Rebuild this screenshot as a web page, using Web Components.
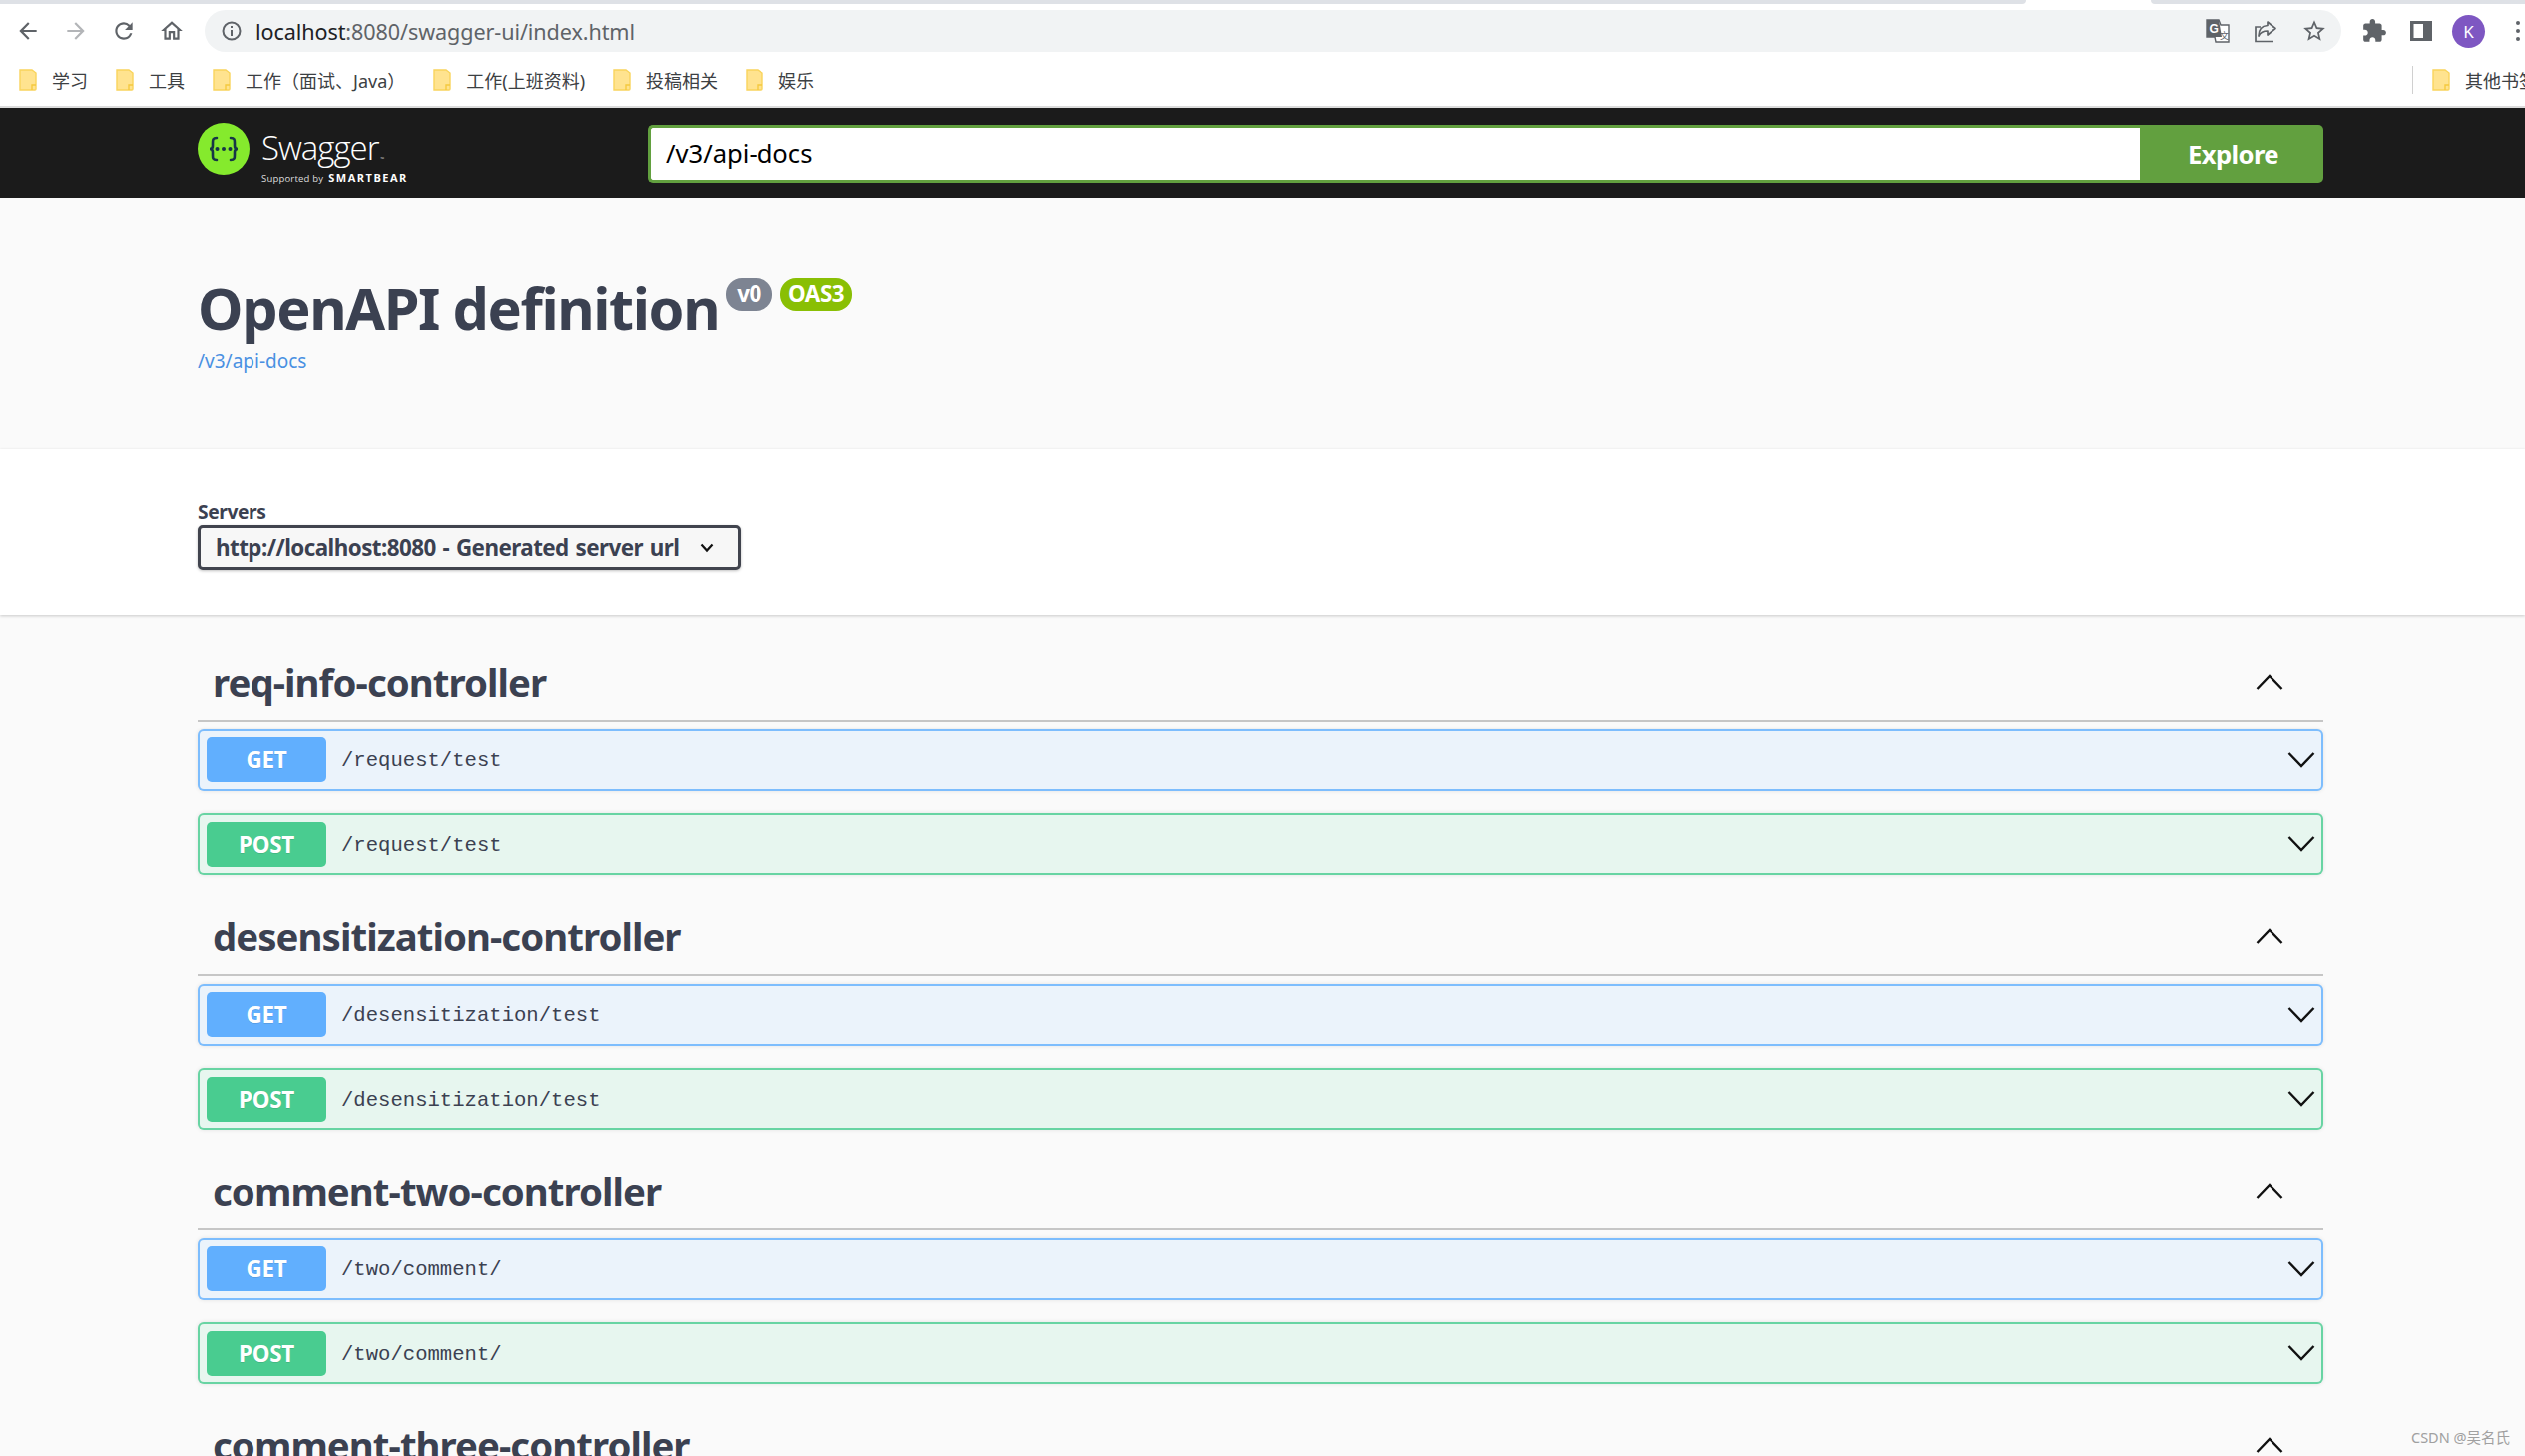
<!DOCTYPE html>
<html lang="en">
<head>
<meta charset="utf-8">
<title>Swagger UI</title>
<style>
    html, body { margin: 0; height: 1459px; overflow: hidden; background: #fafafa; }
    body { font-family: "Noto Sans", "Noto Sans CJK SC", sans-serif; }
    .sections { display: block; padding-top: 6px; }
</style>
</head>
<body>
<browser-bar></browser-bar>
<swagger-nav></swagger-nav>
<api-info></api-info>
<server-picker></server-picker>
<div class="sections">
    <api-tag name="req-info-controller">
        <op-row method="GET" path="/request/test"></op-row>
        <op-row method="POST" path="/request/test"></op-row>
    </api-tag>
    <api-tag name="desensitization-controller">
        <op-row method="GET" path="/desensitization/test"></op-row>
        <op-row method="POST" path="/desensitization/test"></op-row>
    </api-tag>
    <api-tag name="comment-two-controller">
        <op-row method="GET" path="/two/comment/"></op-row>
        <op-row method="POST" path="/two/comment/"></op-row>
    </api-tag>
    <api-tag name="comment-three-controller"></api-tag>
</div>
<water-mark>CSDN @吴名氏</water-mark>

<script>
const ICONS = {
    back: 'M20 11H7.83l5.59-5.59L12 4l-8 8 8 8 1.41-1.41L7.83 13H20v-2z',
    forward: 'M4 11h12.17l-5.59-5.59L12 4l8 8-8 8-1.41-1.41L16.17 13H4v-2z',
    reload: 'M17.65 6.35A7.96 7.96 0 0 0 12 4c-4.42 0-7.99 3.58-7.99 8s3.57 8 7.99 8c3.73 0 6.84-2.55 7.73-6h-2.08A5.99 5.99 0 0 1 12 18c-3.31 0-6-2.69-6-6s2.69-6 6-6c1.66 0 3.14.69 4.22 1.78L13 11h7V4l-2.35 2.35z',
    home: 'M12 5.69l5 4.5V18h-2v-6H9v6H7v-7.81l5-4.5M12 3L2 12h3v8h6v-6h2v6h6v-8h3L12 3z',
    star: 'M22 9.24l-7.19-.62L12 2 9.19 8.63 2 9.24l5.46 4.73L5.82 21 12 17.27 18.18 21l-1.63-7.03L22 9.24zM12 15.4l-3.76 2.27 1-4.28-3.32-2.88 4.38-.38L12 6.1l1.71 4.04 4.38.38-3.32 2.88 1 4.28L12 15.4z',
    puzzle: 'M20.5 11H19V7c0-1.1-.9-2-2-2h-4V3.5C13 2.12 11.88 1 10.5 1S8 2.12 8 3.5V5H4c-1.1 0-1.99.9-1.99 2v3.8H3.5c1.49 0 2.7 1.21 2.7 2.7s-1.21 2.7-2.7 2.7H2V20c0 1.1.9 2 2 2h3.8v-1.5c0-1.49 1.21-2.7 2.7-2.7 1.49 0 2.7 1.21 2.7 2.7V22H17c1.1 0 2-.9 2-2v-4h1.5c1.38 0 2.5-1.12 2.5-2.5S21.88 11 20.5 11z'
};

function icon(name, size, color) {
    return `<svg width="${size}" height="${size}" viewBox="0 0 24 24" fill="${color}"><path d="${ICONS[name]}"/></svg>`;
}

class BookmarkItem extends HTMLElement {
    constructor() {
        super();
        this.attachShadow({ mode: 'open' });
        this.shadowRoot.innerHTML = `
        <style>
            :host { display: flex; align-items: center; gap: 15px; font-size: 18px; color: #3c4043; white-space: nowrap; }
            svg { display: block; flex-shrink: 0; }
        </style>
        <svg width="18" height="22" viewBox="0 0 18 22">
            <path d="M1 1h12l4 3v16a1 1 0 0 1-1 1H1z" fill="#ffe38f" stroke="#f9d45c" stroke-width="1.4"/>
            <path d="M13 21v-5h4" fill="none" stroke="#f5c93f" stroke-width="1.4"/>
        </svg>
        <slot></slot>`;
    }
}

class BrowserBar extends HTMLElement {
    constructor() {
        super();
        this.attachShadow({ mode: 'open' });
        this.shadowRoot.innerHTML = `
        <style>
            :host { display: block; height: 108px; background: #fff; box-sizing: border-box; border-bottom: 2px solid #dcdcdc; overflow: hidden; }
            .tabs { display: flex; height: 4px; }
            .tabs i { background: #dee1e6; flex: 1; }
            .tabs i:first-child { border-bottom-right-radius: 5px; }
            .tabs i:last-child { border-bottom-left-radius: 5px; }
            .tabs b { width: 125px; }
            .tools { display: flex; align-items: center; height: 42px; margin-top: 6px; padding-left: 15px; }
            .nav { display: flex; gap: 22px; width: 190px; }
            svg { display: block; flex-shrink: 0; }
            .url {
                display: flex; align-items: center; width: 2141px; height: 42px; box-sizing: border-box;
                background: #f1f3f4; border-radius: 21px; padding: 0 14px 0 16px;
                font-size: 21.600px; color: #5f6368; letter-spacing: -.1px;
            }
            .url .info { margin-right: 13px; }
            .url b { font-weight: 400; color: #202124; }
            .url .grow { flex: 1; }
            .url .acts { display: flex; align-items: center; gap: 24px; }
            .right { display: flex; align-items: center; margin-left: 20px; gap: 23px; }
            .avatar {
                width: 33px; height: 33px; border-radius: 50%; background: #7e57c2; color: #fff;
                display: flex; align-items: center; justify-content: center; font-size: 17px; margin-left: -3px;
            }
            .dots { display: flex; flex-direction: column; gap: 4px; margin-left: 8px; }
            .dots span { width: 4px; height: 4px; border-radius: 50%; background: #5f6368; }
            .marks { display: flex; align-items: center; height: 42px; margin-top: 7px; padding-left: 19px; }
            .marks bookmark-item + bookmark-item { margin-left: 28px; }
            .marks .spacer { flex: 1; }
            .marks .sep { width: 1px; height: 28px; background: #d0d0d0; margin-right: 19px; }
            .marks bookmark-item.other { margin-left: 0; margin-right: -12px; }
        </style>
        <div class="tabs"><i></i><b></b><i style="flex:0 0 375px"></i></div>
        <div class="tools">
            <div class="nav">
                ${icon('back', 26, '#5f6368')}${icon('forward', 26, '#b3b5b8')}${icon('reload', 26, '#5f6368')}${icon('home', 26, '#5f6368')}
            </div>
            <div class="url">
                <svg class="info" width="22" height="22" viewBox="0 0 22 22" fill="none" stroke="#5f6368" stroke-width="2"><circle cx="11" cy="11" r="8.5"/><path d="M11 10v6M11 6v2"/></svg>
                <span><b>localhost</b>:8080/swagger-ui/index.html</span>
                <span class="grow"></span>
                <div class="acts">
                    <svg width="24" height="24" viewBox="0 0 24 24">
                        <path d="M1 1h12l2 5h8v17H10l-1-5H1z" fill="#fff" stroke="#5f6368" stroke-width="1.4"/>
                        <path d="M1 1h12l3 17H1z" fill="#5f6368"/>
                        <text x="3.5" y="14" font-family="Liberation Sans" font-weight="700" font-size="12" fill="#fff">G</text>
                        <text x="14" y="20" font-family="Noto Sans CJK SC" font-size="9" fill="#5f6368">文</text>
                    </svg>
                    <svg width="24" height="24" viewBox="0 0 24 24" fill="none" stroke="#5f6368" stroke-width="1.7">
                        <path d="M20 22.5H2V8h5"/><path d="M14 3l8 6.5-8 6.5v-4c-4 0-7 1-9 5 0-6 3-10 9-10.500z" stroke-linejoin="round"/>
                    </svg>
                    ${icon('star', 26, '#5f6368')}
                </div>
            </div>
            <div class="right">
                ${icon('puzzle', 26, '#5f6368')}
                <svg width="22" height="22" viewBox="0 0 22 22"><path fill="#5f6368" fill-rule="evenodd" d="M0 1h22v20H0zM3.500 4v14H13V4z"/></svg>
                <div class="avatar">K</div>
                <div class="dots"><span></span><span></span><span></span></div>
            </div>
        </div>
        <div class="marks">
            <bookmark-item>学习</bookmark-item>
            <bookmark-item>工具</bookmark-item>
            <bookmark-item>工作（面试、Java）</bookmark-item>
            <bookmark-item>工作(上班资料)</bookmark-item>
            <bookmark-item>投稿相关</bookmark-item>
            <bookmark-item>娱乐</bookmark-item>
            <span class="spacer"></span>
            <span class="sep"></span>
            <bookmark-item class="other">其他书签</bookmark-item>
        </div>`;
    }
}

class SwaggerNav extends HTMLElement {
    constructor() {
        super();
        this.attachShadow({ mode: 'open' });
        this.shadowRoot.innerHTML = `
        <style>
            :host { display: flex; align-items: center; height: 90px; background: #1b1b1b; padding: 0 202px 0 198px; box-sizing: border-box; }
            .logo { display: flex; align-items: center; gap: 12px; width: 451px; margin-top: -8px; color: #fff; flex-shrink: 0; }
            svg { display: block; }
            .name { font: 300 33px/36px "Open Sans", sans-serif; letter-spacing: -1px; margin: 17px 0 -5px; }
            .name sup { font-size: 5px; letter-spacing: 0; vertical-align: -1px; margin-left: 2px; }
            .by { display: flex; align-items: baseline; gap: 5px; font: 400 9.500px/12px "Open Sans", sans-serif; letter-spacing: .2px; color: #ddd; }
            .by b { font-size: 11px; font-weight: 700; letter-spacing: 1.500px; color: #fff; }
            form { display: flex; flex: 1; height: 58px; margin-top: 2px; }
            .input {
                flex: 1; box-sizing: border-box; background: #fff; border: 3px solid #62a03f; border-right: 0;
                border-radius: 5px 0 0 5px; font-size: 25.600px; line-height: 52px; padding-left: 15px; color: #000;
            }
            .explore {
                width: 184px; background: #62a03f; color: #fff; border-radius: 0 5px 5px 0; letter-spacing: -.6px;
                display: flex; align-items: center; justify-content: center; font-size: 25.600px; font-weight: 700; padding-left: 3px; box-sizing: border-box;
            }
        </style>
        <div class="logo">
            <svg width="52" height="52" viewBox="0 0 52 52">
                <circle cx="26" cy="26" r="26" fill="#85ea2d"/>
                <g fill="none" stroke="#173647" stroke-width="2.600" stroke-linecap="round">
                    <path d="M19 15c-4 0-4 2-4 5v3c0 2-1 3-3 3 2 0 3 1 3 3v3c0 3 0 5 4 5"/>
                    <path d="M33 15c4 0 4 2 4 5v3c0 2 1 3 3 3-2 0-3 1-3 3v3c0 3 0 5-4 5"/>
                </g>
                <g fill="#173647"><circle cx="19.500" cy="26" r="2"/><circle cx="26" cy="26" r="2"/><circle cx="32.500" cy="26" r="2"/></g>
            </svg>
            <div>
                <div class="name">Swagger<sup>™</sup></div>
                <div class="by">Supported by <b>SMARTBEAR</b></div>
            </div>
        </div>
        <form>
            <div class="input">/v3/api-docs</div>
            <div class="explore">Explore</div>
        </form>`;
    }
}

class ApiInfo extends HTMLElement {
    constructor() {
        super();
        this.attachShadow({ mode: 'open' });
        this.shadowRoot.innerHTML = `
        <style>
            :host { display: block; height: 252px; box-sizing: border-box; background: #fafafa; padding: 72px 198px 0; color: #3b4151; }
            .head { display: flex; align-items: flex-start; }
            h1 { margin: 0; font-size: 57.600px; line-height: 78px; font-weight: 700; letter-spacing: -1.400px; }
            .badge {
                margin: 9px 0 0 7px; height: 33px; border-radius: 16px; padding: 0 11px; color: #fff;
                font-size: 22.400px; font-weight: 700; line-height: 32px; background: #7d8492; letter-spacing: -.4px;
            }
            .badge.oas { background: #89bf04; padding: 0 8px; margin-left: 8px; }
            a { display: block; margin-top: 1px; font-size: 19px; line-height: 26px; color: #4990e2; text-decoration: none; }
        </style>
        <div class="head">
            <h1>OpenAPI definition</h1>
            <span class="badge">v0</span>
            <span class="badge oas">OAS3</span>
        </div>
        <a>/v3/api-docs</a>`;
    }
}

class ServerPicker extends HTMLElement {
    constructor() {
        super();
        this.attachShadow({ mode: 'open' });
        this.shadowRoot.innerHTML = `
        <style>
            :host {
                display: block; height: 166px; box-sizing: border-box; background: #fff; padding: 50px 198px 0;
                box-shadow: 0 1px 3px rgba(0,0,0,.2); position: relative; color: #3b4151;
            }
            label { display: block; font-size: 19.200px; line-height: 26px; font-weight: 700; letter-spacing: -.4px; }
            .select {
                display: flex; align-items: center; justify-content: space-between; width: 544px; height: 45px;
                box-sizing: border-box; border: 3px solid #41444e; border-radius: 5px; background: #f7f7f7;
                padding: 0 24px 0 15px; font-size: 22.400px; font-weight: 700; box-shadow: 0 1px 3px rgba(0,0,0,.25);
                letter-spacing: -.55px; word-spacing: 1.500px;
            }
            svg { display: block; }
        </style>
        <label>Servers</label>
        <div class="select">
            <span>http://localhost:8080 - Generated server url</span>
            <svg width="14" height="10" viewBox="0 0 14 10" fill="none" stroke="#111" stroke-width="2.200"><path d="M1.500 1.500 7 7.500l5.500-6"/></svg>
        </div>`;
    }
}

class ApiTag extends HTMLElement {
    constructor() {
        super();
        this.attachShadow({ mode: 'open' });
        this.shadowRoot.innerHTML = `
        <style>
            :host { display: block; margin: 0 202px 0 198px; padding-top: 28.500px; }
            .head {
                display: flex; align-items: center; justify-content: space-between; height: 72px; box-sizing: border-box;
                border-bottom: 2px solid #c6c6c6; padding: 0 40.500px 6px 15px; color: #3b4151;
                font-size: 38.400px; font-weight: 700; background: #fafafa; letter-spacing: -.95px;
            }
            svg { display: block; }
            .rows { display: flex; flex-direction: column; gap: 22.500px; margin-top: 8px; }
        </style>
        <div class="head">
            <span class="name"></span>
            <svg width="28" height="16" viewBox="0 0 28 16" fill="none" stroke="#111" stroke-width="2.400"><path d="M1.500 15 14 2l12.500 13"/></svg>
        </div>
        <div class="rows"><slot></slot></div>`;
        this.shadowRoot.querySelector('.name').textContent = this.getAttribute('name');
    }
}

class OpRow extends HTMLElement {
    static COLORS = {
        GET: { main: '#61affe', edge: '#61affecc', bg: '#ebf3fb' },
        POST: { main: '#49cc90', edge: '#49cc90cc', bg: '#e7f6ef' }
    };

    constructor() {
        super();
        this.attachShadow({ mode: 'open' });
        const c = OpRow.COLORS[this.getAttribute('method')];
        this.shadowRoot.innerHTML = `
        <style>
            :host {
                display: flex; align-items: center; height: 62px; box-sizing: border-box; padding: 0 6px 0 7px;
                border: 2px solid ${c.edge}; border-radius: 6px; background: ${c.bg};
                box-shadow: 0 0 4px rgba(0,0,0,.1);
            }
            .method {
                width: 120px; height: 45px; border-radius: 5px; background: ${c.main}; color: #fff;
                display: flex; align-items: center; justify-content: center; font-size: 22.400px; font-weight: 700;
                text-shadow: 0 1px 0 rgba(0,0,0,.1); letter-spacing: -.2px;
            }
            .path { margin: 2px 0 0 15px; flex: 1; font-family: "Liberation Mono", monospace; font-size: 20.600px; color: #3b4151; }
            svg { display: block; }
        </style>
        <span class="method"></span>
        <span class="path"></span>
        <svg width="28" height="16" viewBox="0 0 28 16" fill="none" stroke="#111" stroke-width="2.400"><path d="M1.500 1 14 14 26.500 1"/></svg>`;
        this.shadowRoot.querySelector('.method').textContent = this.getAttribute('method');
        this.shadowRoot.querySelector('.path').textContent = this.getAttribute('path');
    }
}

class WaterMark extends HTMLElement {
    constructor() {
        super();
        this.attachShadow({ mode: 'open' });
        this.shadowRoot.innerHTML = `
        <style>
            :host { position: absolute; left: 2416px; top: 1430px; font-size: 14.500px; line-height: 20px; color: #a0a0a0; white-space: nowrap; }
        </style>
        <slot></slot>`;
    }
}

customElements.define('bookmark-item', BookmarkItem);
customElements.define('browser-bar', BrowserBar);
customElements.define('swagger-nav', SwaggerNav);
customElements.define('api-info', ApiInfo);
customElements.define('server-picker', ServerPicker);
customElements.define('api-tag', ApiTag);
customElements.define('op-row', OpRow);
customElements.define('water-mark', WaterMark);
</script>
</body>
</html>
